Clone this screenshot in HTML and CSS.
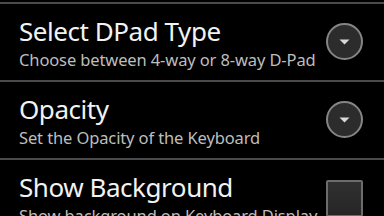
FILE: index.html
```html
<!DOCTYPE html>
<html lang="en">
<head>
  <meta charset="UTF-8">
  <meta name="viewport" content="width=device-width, initial-scale=1.0">
  <title>Keyboard Settings</title>
  <link rel="stylesheet" href="styles.css">
</head>
<body>
  <div class="pref-list">
    <div class="pref-row">
      <div class="pref-text">
        <div class="pref-title">Select DPad Type</div>
        <div class="pref-summary">Choose between 4-way or 8-way D-Pad</div>
      </div>
      <div class="spinner">
        <svg width="37" height="37" viewBox="0 0 37 37">
          <circle cx="18.5" cy="18.5" r="17.5" fill="#2c2c2c" stroke="#858585" stroke-width="2"/>
          <path d="M13.5 16.5 L23.5 16.5 L18.5 21.5 Z" fill="#d8d8d8"/>
        </svg>
      </div>
    </div>

    <div class="pref-row">
      <div class="pref-text">
        <div class="pref-title">Opacity</div>
        <div class="pref-summary">Set the Opacity of the Keyboard</div>
      </div>
      <div class="spinner">
        <svg width="37" height="37" viewBox="0 0 37 37">
          <circle cx="18.5" cy="18.5" r="17.5" fill="#2c2c2c" stroke="#858585" stroke-width="2"/>
          <path d="M13.5 16.5 L23.5 16.5 L18.5 21.5 Z" fill="#d8d8d8"/>
        </svg>
      </div>
    </div>

    <div class="pref-row">
      <div class="pref-text">
        <div class="pref-title">Show Background</div>
        <div class="pref-summary">Show background on Keyboard Display</div>
      </div>
      <div class="checkbox"></div>
    </div>
  </div>
</body>
</html>
```

FILE: styles.css
```css
body {
  margin: 0;
  background-color: #000;
  font-family: 'Noto Sans', 'Open Sans', sans-serif;
  overflow: hidden;
}

.pref-list {
  padding-top: 2px;
}

.pref-row {
  display: flex;
  align-items: center;
  border-top: 2px solid #4a4a4a;
  padding: 11px 21px 10px 19px;
}

.pref-text {
  flex: 1;
}

.pref-title {
  font-size: 26px;
  line-height: 32px;
  letter-spacing: -0.45px;
  color: #f2f2f2;
}

.pref-summary {
  margin-top: 3px;
  font-size: 16.5px;
  line-height: 20px;
  letter-spacing: -0.12px;
  color: #bdbdbd;
}

.spinner {
  width: 37px;
  height: 37px;
  margin-bottom: 2px;
}

.spinner svg {
  display: block;
}

.checkbox {
  width: 33px;
  height: 33px;
  border: 2px solid #6c6c6c;
  border-radius: 2px;
  background: linear-gradient(#303030, #262626);
}
```
